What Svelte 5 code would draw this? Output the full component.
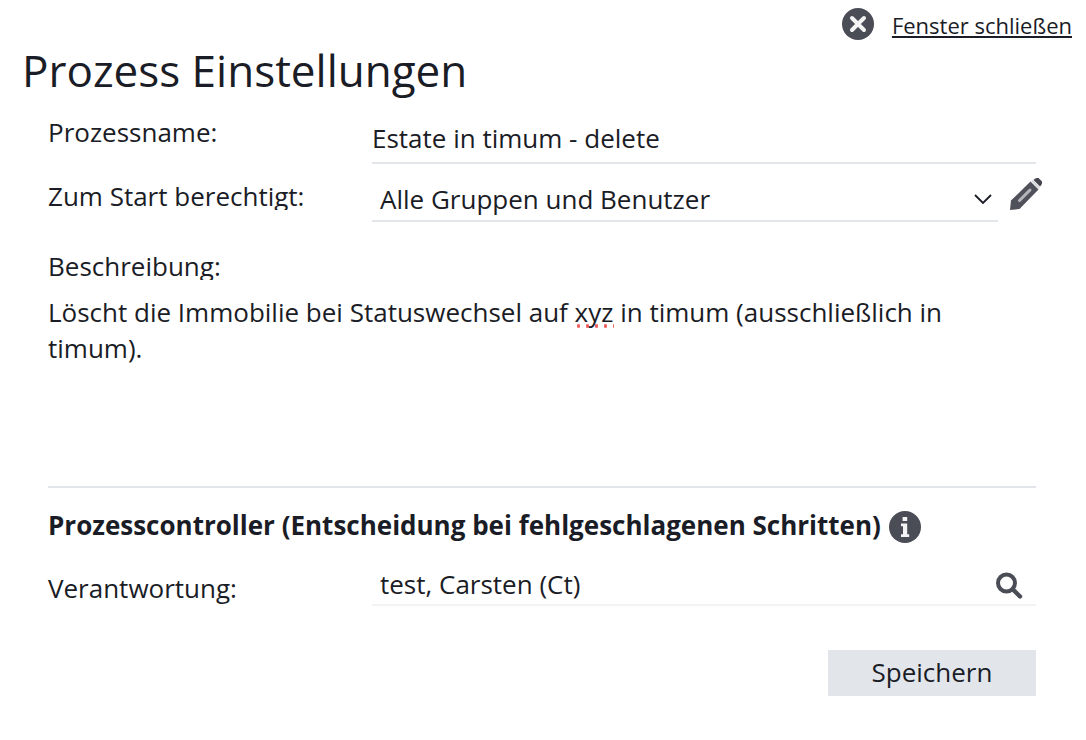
<script>
  let name = $state('Estate in timum - delete');
  let group = $state('all');
  let description = $state(
    'Löscht die Immobilie bei Statuswechsel auf xyz in timum (ausschließlich in timum).'
  );
  let responsible = $state('test, Carsten (Ct)');
</script>

<main>
  <div class="topbar">
    <a href="#close" class="close">
      <svg width="32" height="32" viewBox="0 0 32 32" aria-hidden="true">
        <circle cx="16" cy="16" r="16" fill="#4a4d55" />
        <path d="M10 10L22 22M22 10L10 22" stroke="#f4f4f5" stroke-width="4" stroke-linecap="round" />
      </svg>
      <span>Fenster schließen</span>
    </a>
  </div>

  <h1>Prozess Einstellungen</h1>

  <form onsubmit={(e) => e.preventDefault()}>
    <div class="row name-row">
      <label for="name">Prozessname:</label>
      <input id="name" type="text" bind:value={name} />
    </div>

    <div class="row group-row">
      <label class="clipped" for="group">Zum Start berechtigt:</label>
      <div class="picker">
        <div class="select">
          <select id="group" bind:value={group}>
            <option value="all">Alle Gruppen und Benutzer</option>
          </select>
          <svg class="chevron" width="18" height="12" viewBox="0 0 18 12" aria-hidden="true">
            <path d="M1 2L9 10L17 2" fill="none" stroke="#1a1c26" stroke-width="1.8" />
          </svg>
        </div>
        <button type="button" class="icon edit" aria-label="Bearbeiten">
          <svg width="32" height="32" viewBox="0 0 32 32" aria-hidden="true">
            <path d="M0 32L1 22.5L20.5 3.5L28.5 11.5L9.5 31Z" fill="#4f525a" />
            <path d="M9.5 22.5L20 12" stroke="#b4b6bb" stroke-width="3" stroke-linecap="round" />
            <path d="M23.5 2Q25.5 -0.5 28.5 0L32 3.5Q32.5 6 30 8.5Z" fill="#44474f" />
            <path d="M22 2.6L29.4 10" stroke="#d4d5d8" stroke-width="1.8" />
          </svg>
        </button>
      </div>
    </div>

    <label class="block-label clipped" for="description">Beschreibung:</label>
    <div class="description">
      <textarea id="description" spellcheck="false" bind:value={description}></textarea>
      <span class="spelling" aria-hidden="true"></span>
    </div>

    <h2>
      Prozesscontroller (Entscheidung bei fehlgeschlagenen Schritten)
      <svg width="32" height="32" viewBox="0 0 32 32" aria-hidden="true">
        <circle cx="16" cy="16" r="16" fill="#4a4d55" />
        <path d="M13.6 6H18.2V10H13.6ZM12 12.6H18.2V23.2H20.2V26H12V23.2H14V15.2H12Z" fill="#f4f4f5" />
      </svg>
    </h2>

    <div class="row owner-row">
      <label for="responsible">Verantwortung:</label>
      <div class="search">
        <input id="responsible" type="text" bind:value={responsible} />
        <button type="button" class="icon" aria-label="Suchen">
          <svg width="28" height="28" viewBox="0 0 28 28" aria-hidden="true">
            <circle cx="10.5" cy="11" r="8.5" fill="none" stroke="#4a4d55" stroke-width="4" />
            <path d="M17 17.5L24 24.5" stroke="#4a4d55" stroke-width="4.4" stroke-linecap="round" />
          </svg>
        </button>
      </div>
    </div>

    <div class="actions">
      <button type="submit" class="save">Speichern</button>
    </div>
  </form>
</main>

<style>
  :global(body) {
    margin: 0;
    background: #fff;
  }

  main {
    color: #1a1c26;
    font-family: 'Open Sans', sans-serif;
    font-size: 26px;
    line-height: 36px;
  }

  svg {
    display: block;
    flex: none;
  }

  .topbar {
    display: flex;
    justify-content: flex-end;
    padding: 8px 14px 0;
  }

  .close {
    display: flex;
    align-items: flex-start;
    gap: 18px;
    color: inherit;
    font-size: 22px;
    line-height: 34px;
    text-decoration: none;
  }

  .close span {
    text-decoration: underline;
    text-decoration-thickness: 2px;
    text-underline-offset: 2px;
    text-decoration-skip-ink: none;
  }

  h1 {
    margin: 0 0 20px 22px;
    font-size: 44px;
    font-weight: 400;
    line-height: 56px;
  }

  form {
    padding: 0 50px 44px 48px;
  }

  input,
  select,
  textarea,
  button {
    box-sizing: border-box;
    margin: 0;
    padding: 0;
    border: 0;
    border-radius: 0;
    outline: 0;
    background: transparent;
    color: inherit;
    font: inherit;
  }

  label {
    line-height: 28px;
  }

  .clipped {
    height: 28px;
    overflow: hidden;
  }

  .row {
    display: grid;
    grid-template-columns: 324px 1fr;
    align-items: start;
  }

  input {
    width: 100%;
    min-width: 0;
  }

  .name-row input {
    height: 46px;
    padding-bottom: 4px;
    border-bottom: 2px solid #e2e5e9;
  }

  .group-row {
    margin-top: 14px;
  }

  .group-row label {
    margin-top: 4px;
  }

  .picker {
    display: flex;
    gap: 12px;
    margin-right: -6px;
  }

  .select {
    display: grid;
    flex: 1;
    align-items: center;
    border-bottom: 2px solid #e2e5e9;
  }

  .select select {
    grid-area: 1 / 1;
    width: 100%;
    height: 42px;
    padding: 0 40px 0 8px;
    appearance: none;
  }

  .chevron {
    grid-area: 1 / 1;
    justify-self: end;
    margin-right: 6px;
    pointer-events: none;
  }

  .icon {
    display: flex;
    flex: none;
    cursor: pointer;
  }

  .block-label {
    display: block;
    margin-top: 30px;
  }

  .description {
    position: relative;
    margin-top: 14px;
  }

  textarea {
    display: block;
    width: 100%;
    height: 194px;
    border-bottom: 2px solid #e2e5e9;
    overflow: hidden;
    resize: none;
  }

  .spelling {
    position: absolute;
    top: 30px;
    left: 526px;
    width: 40px;
    height: 4px;
    background: radial-gradient(circle, #ee5a5a 1px, #ee5a5a88 2px, transparent 2px) 0 0 / 9px 4px;
    pointer-events: none;
  }

  h2 {
    display: flex;
    gap: 8px;
    align-items: flex-end;
    margin: 19px 0 0;
    font-size: 26px;
    line-height: 36px;
  }

  .owner-row {
    margin-top: 23px;
  }

  .owner-row label {
    margin-top: 4px;
    line-height: 36px;
  }

  .search {
    display: flex;
    align-items: flex-end;
    padding: 0 12px 0 8px;
    border-bottom: 2px solid #f2f3f4;
  }

  .search input {
    height: 38px;
    padding-bottom: 2px;
  }

  .search .icon {
    padding-bottom: 4px;
  }

  .actions {
    display: flex;
    justify-content: flex-end;
    margin-top: 44px;
  }

  .save {
    min-width: 208px;
    height: 46px;
    padding-bottom: 2px;
    background: #e2e6eb;
    cursor: pointer;
  }
</style>
